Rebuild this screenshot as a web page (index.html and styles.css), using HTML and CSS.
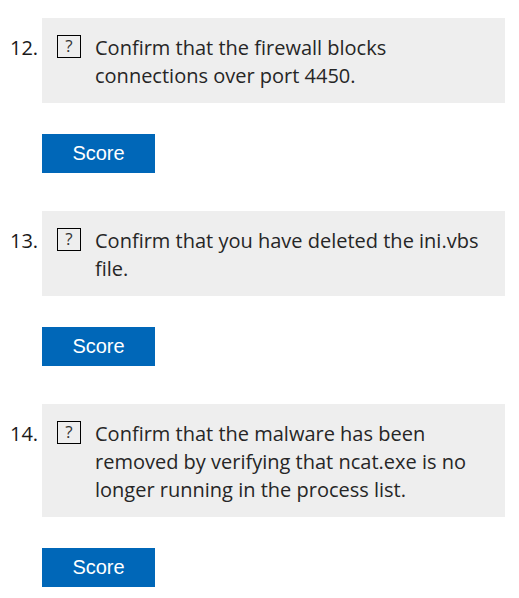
FILE: index.html
```html
<!DOCTYPE html>
<html>
<head>
<meta charset="utf-8">
<link rel="stylesheet" href="styles.css">
</head>
<body>
<ol class="tasks">
  <li class="task">
    <div class="row">
      <span class="num">12.</span>
      <div class="box">
        <span class="qicon">?</span>
        <p class="text">Confirm that the firewall blocks connections over port 4450.</p>
      </div>
    </div>
    <button class="score">Score</button>
  </li>
  <li class="task">
    <div class="row">
      <span class="num">13.</span>
      <div class="box">
        <span class="qicon">?</span>
        <p class="text">Confirm that you have deleted the ini.vbs file.</p>
      </div>
    </div>
    <button class="score">Score</button>
  </li>
  <li class="task">
    <div class="row">
      <span class="num">14.</span>
      <div class="box">
        <span class="qicon">?</span>
        <p class="text">Confirm that the malware has been removed by verifying that ncat.exe is no longer running in the process list.</p>
      </div>
    </div>
    <button class="score">Score</button>
  </li>
</ol>
</body>
</html>
```

FILE: styles.css
```css
html, body {
  margin: 0;
  padding: 0;
  background: #ffffff;
}
.tasks {
  list-style: none;
  margin: 0;
  padding: 18px 14px 0 0;
  display: flex;
  flex-direction: column;
  gap: 38px;
  font-family: "Open Sans", "Noto Sans", sans-serif;
}
.task {
  display: flex;
  flex-direction: column;
  gap: 31px;
}
.row {
  display: flex;
}
.num {
  width: 32px;
  padding: 16px 0 0 10px;
  font-size: 20px;
  line-height: 28px;
  color: #1a1a1a;
  flex: none;
}
.box {
  flex: 1;
  background: #eeeeee;
  display: flex;
  align-items: flex-start;
  gap: 14px;
  padding: 16px 15px 13px 15px;
}
.qicon {
  flex: none;
  box-sizing: border-box;
  width: 24px;
  height: 23px;
  margin-top: 1px;
  border: 1px solid #000;
  font-size: 17px;
  line-height: 20px;
  text-align: center;
  color: #333;
}
.text {
  margin: 0;
  font-size: 20px;
  line-height: 28px;
  color: #262626;
}
.score {
  margin-left: 42px;
  width: 113px;
  height: 39px;
  border: 0;
  padding: 0;
  background: #0067b8;
  color: #fff;
  font-family: "Liberation Sans", Arial, sans-serif;
  font-size: 20px;
  align-self: flex-start;
}
```
